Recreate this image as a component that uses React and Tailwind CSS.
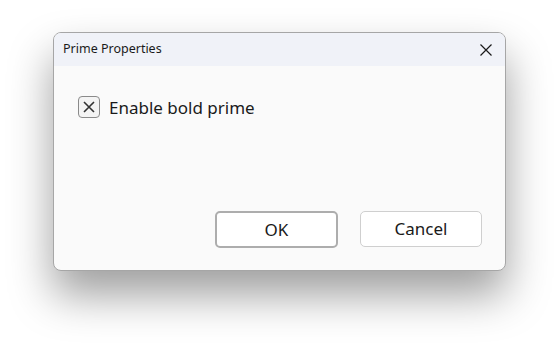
export default function App() {
  return (
    <div className="w-[560px] h-[362px] bg-white pt-[32px] pl-[53px]" style={{ fontFamily: '"Noto Sans", "Open Sans", sans-serif' }}>
      <div className="w-[453px] h-[239px] rounded-[8px] border border-[#a6a6a6] bg-[#fafafa] overflow-hidden flex flex-col shadow-[0_24px_44px_rgba(0,0,0,0.38)]">
        <div className="h-[33px] bg-[#f0f2f8] flex items-center justify-between pl-[9px] pr-[12px]">
          <span className="text-[12.5px] text-[#1a1a1a]">Prime Properties</span>
          <svg width="14" height="14" viewBox="0 0 14 14">
            <path d="M1.5 1.5 L12.5 12.5 M12.5 1.5 L1.5 12.5" stroke="#1a1a1a" strokeWidth="1.2" fill="none" />
          </svg>
        </div>
        <div className="flex-1 flex flex-col">
          <div className="flex items-center mt-[30px] ml-[24px] gap-[9px]">
            <div className="w-[22px] h-[22px] rounded-[4px] border border-[#8a8a8a] bg-[#f4f4f4] flex items-center justify-center">
              <svg width="14" height="14" viewBox="0 0 14 14">
                <path d="M2 2 L12 12 M12 2 L2 12" stroke="#333" strokeWidth="1.6" fill="none" />
              </svg>
            </div>
            <span className="text-[17px] text-[#1a1a1a] leading-none">Enable bold prime</span>
          </div>
          <div className="flex justify-end gap-[22px] mt-[93px] mr-[23px]">
            <button className="w-[123px] h-[37px] rounded-[5px] border-2 border-[#adadad] bg-white text-[17px] text-[#1a1a1a] flex items-center justify-center">OK</button>
            <button className="w-[122px] h-[36px] rounded-[5px] border border-[#cfcfcf] bg-white text-[17px] text-[#1a1a1a] flex items-center justify-center">Cancel</button>
          </div>
        </div>
      </div>
    </div>
  );
}
